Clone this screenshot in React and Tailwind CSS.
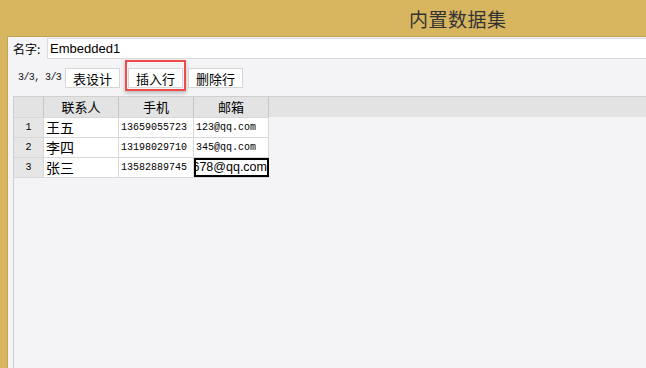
const rows = [
  { n: "1", name: "王五", phone: "13659055723", mail: "123@qq.com" },
  { n: "2", name: "李四", phone: "13198029710", mail: "345@qq.com" },
  { n: "3", name: "张三", phone: "13582889745", mail: "678@qq.com", editing: true },
];

const cjk = "font-['Microsoft_YaHei','Noto_Sans_CJK_SC',sans-serif]";
const mono = "font-['Liberation_Mono','Noto_Sans_CJK_SC',monospace]";

function ToolButton({ children, marked }) {
  return (
    <div className="relative">
      <button className={`block h-[20px] w-[55px] bg-white border border-[#d6d6d6] text-[13px] leading-none text-black ${cjk}`}>
        {children}
      </button>
      {marked && (
        <span className="absolute -top-[8px] -bottom-[3px] -left-[3px] -right-[3px] border-2 border-[#ef4b4b] shadow-[0_2px_4px_rgba(0,0,0,0.25)] pointer-events-none"></span>
      )}
    </div>
  );
}

export default function App() {
  return (
    <div className="w-[646px] h-[368px] bg-[#d7b65f] flex flex-col overflow-hidden">
      {/* title bar */}
      <div className="h-[36px] shrink-0 flex items-center pl-[409px]">
        <span className={`text-[19px] leading-none text-[#333] tracking-[0.5px] ${cjk}`}>内置数据集</span>
      </div>

      <div className="flex-1 ml-[7px] border-t border-l border-[#c2a452] bg-[#f4f4f6] flex flex-col min-h-0">
        {/* name row */}
        <div className="flex items-center pt-[1px] pl-[5px]">
          <span className={`text-[12px] text-black w-[34px] ${cjk}`}>名字:</span>
          <div className="flex-1 h-[21px] bg-white border border-[#dadada] border-r-0 flex items-center pl-[2px]">
            <span className="text-[13px] text-black font-['Liberation_Sans',sans-serif]">Embedded1</span>
          </div>
        </div>

        {/* toolbar */}
        <div className="flex items-center mt-[9px] pl-[10px] h-[20px]">
          <span className={`text-[10px] leading-none tracking-[-0.6px] text-[#111] w-[47px] ${mono}`}>3/3, 3/3</span>
          <div className="flex gap-[8px]">
            <ToolButton>表设计</ToolButton>
            <ToolButton marked>插入行</ToolButton>
          </div>
          <div className="ml-[5px]">
            <ToolButton>删除行</ToolButton>
          </div>
        </div>

        {/* grid */}
        <div className="flex-1 mt-[8px] ml-[5px] border-t border-l border-[#cfcfcf] flex flex-col">
          <div className={`h-[20px] bg-[#e3e3e3] flex text-[13px] text-black ${cjk}`}>
            <div className="w-[30px] border-r border-[#c6c6c6]"></div>
            <div className="w-[75px] border-r border-[#c6c6c6] flex items-center justify-center">联系人</div>
            <div className="w-[75px] border-r border-[#c6c6c6] flex items-center justify-center">手机</div>
            <div className="w-[75px] border-r border-[#c6c6c6] flex items-center justify-center">邮箱</div>
          </div>
          {rows.map((r) => (
            <div key={r.n} className="h-[20px] flex border-t border-[#d8d8d8] w-[255px]">
              <div className={`w-[30px] bg-[#e6e6e6] border-r border-[#d8d8d8] flex items-center justify-center text-[10px] ${mono}`}>
                {r.n}
              </div>
              <div className={`w-[75px] bg-white border-r border-[#d8d8d8] flex items-center pl-[2px] text-[14px] text-black ${cjk}`}>
                {r.name}
              </div>
              <div className={`w-[75px] bg-white border-r border-[#d8d8d8] flex items-center pl-[2px] text-[10px] text-black ${mono}`}>
                {r.phone}
              </div>
              {r.editing ? (
                <div className="w-[75px] bg-white border-2 border-black flex items-center justify-end overflow-hidden text-[12.5px] text-black font-['Liberation_Sans',sans-serif] whitespace-nowrap">
                  <span className="shrink-0">{r.mail}</span>
                </div>
              ) : (
                <div className={`w-[75px] bg-white border-r border-[#d8d8d8] flex items-center pl-[2px] text-[10px] text-black ${mono}`}>
                  {r.mail}
                </div>
              )}
            </div>
          ))}
          <div className="w-[255px] border-t border-[#d8d8d8]"></div>
        </div>
      </div>
    </div>
  );
}
